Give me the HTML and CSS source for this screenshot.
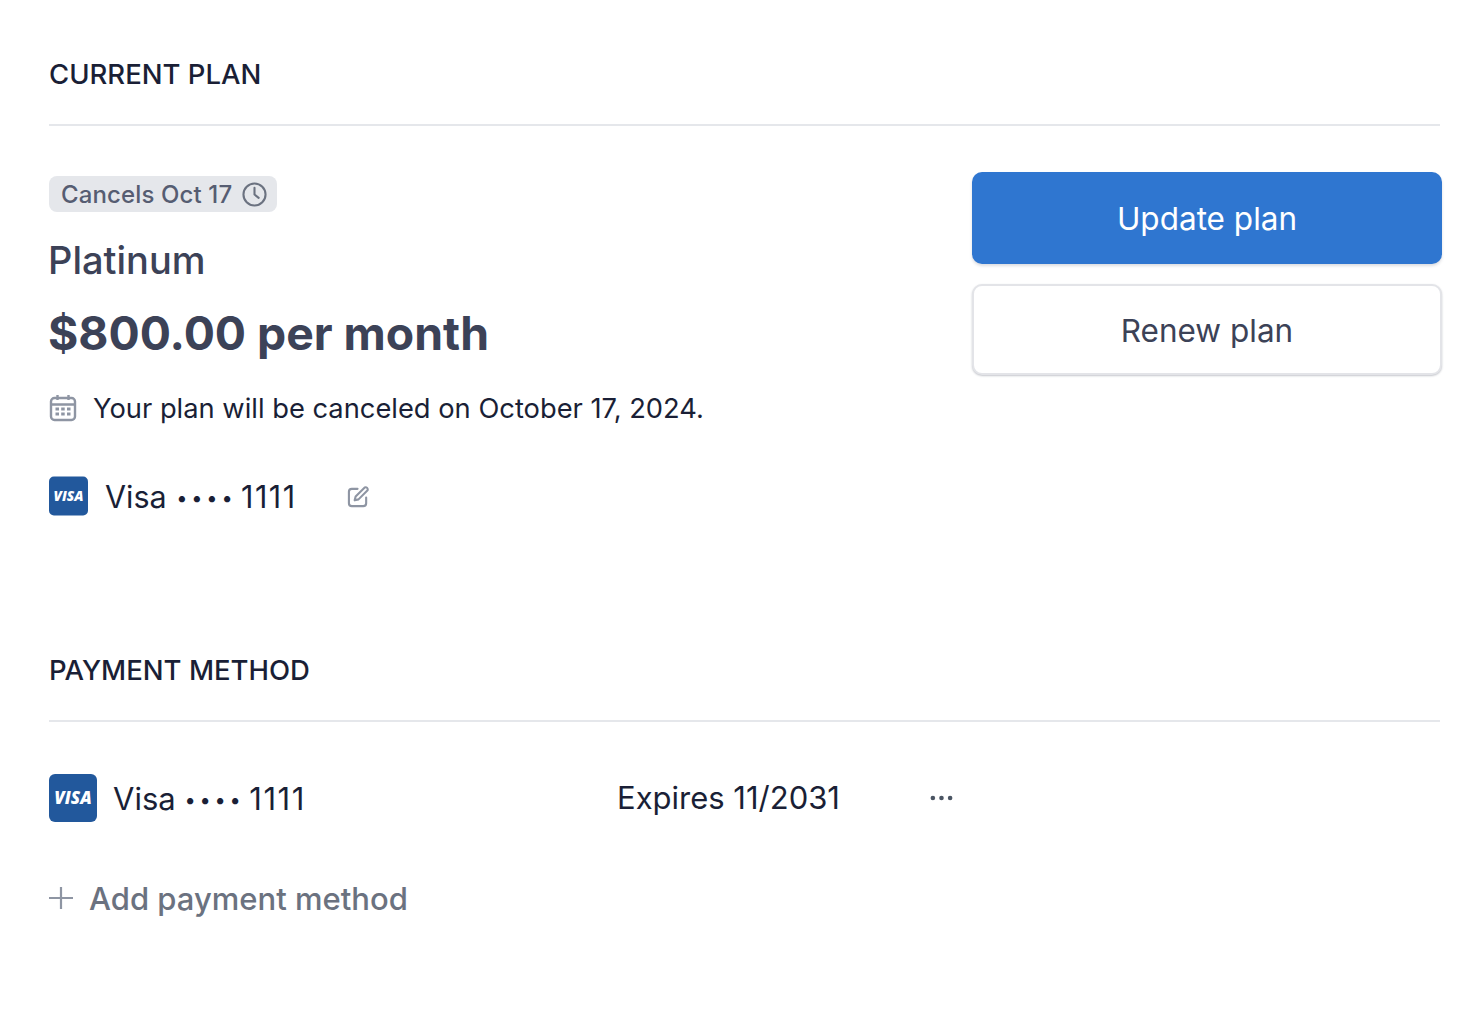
FILE: index.html
```html
<!DOCTYPE html>
<html lang="en">
<head>
<meta charset="utf-8">
<title>Billing</title>
<link rel="stylesheet" href="styles.css">
</head>
<body>
<main class="page">
  <section class="plan-section">
    <h2 class="section-title">CURRENT PLAN</h2>
    <div class="plan-body">
      <div class="plan-info">
        <span class="badge">Cancels Oct 17
          <svg class="badge-icon" viewBox="0 0 24 24" fill="none" stroke="#6b7280" stroke-width="2"><circle cx="12" cy="12" r="10.600"/><path d="M12 5.500V12l4 3.200" stroke-linecap="round" stroke-linejoin="round"/></svg>
        </span>
        <div class="plan-name">Platinum</div>
        <div class="plan-price">$800.00 per month</div>
        <div class="notice">
          <svg class="calendar" viewBox="0 0 28 28" fill="none" stroke="#8e95a3" stroke-width="2.400"><rect x="2" y="4" width="24" height="22" rx="3.500"/><path d="M2 10.500h24M8.500 1v5M19.500 1v5"/><path d="M6.500 15h3.500M12.200 15h3.500M18 15h3.500M6.500 20h3.500M12.200 20h3.500M18 20h3.500" stroke-width="3.200"/></svg>
          <span>Your plan will be canceled on October 17, 2024.</span>
        </div>
        <div class="card-row">
          <svg class="visa visa-small" viewBox="0 0 40 40"><rect width="40" height="40" rx="5" fill="#22589c"/><text x="20" y="25" class="visa-text" text-anchor="middle">VISA</text></svg>
          <span class="card-label card-label-small">Visa <span class="dots">••••</span> <span class="digits">1111</span></span>
          <svg class="edit" viewBox="0 0 24 24" fill="none" stroke="#8e95a3" stroke-width="2.200" stroke-linecap="round" stroke-linejoin="round"><path d="M11 4H5a3 3 0 0 0-3 3v12a3 3 0 0 0 3 3h12a3 3 0 0 0 3-3v-6"/><path d="M18.500 2.500a2.300 2.300 0 0 1 3 3L12 15l-4 1 1-4z"/></svg>
        </div>
      </div>
      <div class="actions">
        <button class="btn btn-primary" type="button">Update plan</button>
        <button class="btn btn-secondary" type="button">Renew plan</button>
      </div>
    </div>
  </section>
  <section class="payment-section">
    <h2 class="section-title">PAYMENT METHOD</h2>
    <div class="method-row">
      <div class="method-card">
        <svg class="visa visa-large" viewBox="0 0 48 48"><rect width="48" height="48" rx="6" fill="#22589c"/><text x="24" y="30" class="visa-text visa-text-large" text-anchor="middle">VISA</text></svg>
        <span class="card-label">Visa <span class="dots">••••</span> <span class="digits">1111</span></span>
      </div>
      <span class="expires">Expires 11/2031</span>
      <svg class="more" viewBox="0 0 24 6" fill="#4b5563"><circle cx="3" cy="3" r="2.400"/><circle cx="12" cy="3" r="2.400"/><circle cx="21" cy="3" r="2.400"/></svg>
    </div>
    <div class="add-row">
      <svg class="plus" viewBox="0 0 24 24" fill="none" stroke="#8e95a3" stroke-width="2.200"><path d="M12 1v22M0 12h24"/></svg>
      <span>Add payment method</span>
    </div>
  </section>
</main>
</body>
</html>
```
FILE: styles.css
```css
* { box-sizing: border-box; }
html, body { margin: 0; padding: 0; background: #fff; }
body { font-family: Inter, "Liberation Sans", sans-serif; color: #1a1f36; }
.page { width: 1466px; height: 1014px; padding: 56px 26px 0 49px; overflow: hidden; }
.section-title { margin: 0; height: 70px; border-bottom: 2px solid #e5e7eb; font-size: 27.500px; line-height: 36px; font-weight: 450; color: #1a1f36; }
.plan-body { display: flex; justify-content: space-between; padding-top: 46px; margin-right: -2px; }
.plan-info { display: flex; flex-direction: column; align-items: flex-start; padding-top: 4px; }
.badge { display: inline-flex; align-items: center; gap: 10px; height: 36px; padding: 0 10px 0 12px; border-radius: 8px; background: #e5e7eb; color: #565d72; font-size: 24px; font-weight: 450; letter-spacing: 0.130px; }
.badge-icon { width: 25px; height: 25px; }
.plan-name { margin-top: 25px; margin-left: -1px; font-size: 38px; line-height: 46px; font-weight: 450; color: #3c4257; }
.plan-price { margin-top: 22px; margin-left: -1px; font-size: 46.300px; line-height: 56px; font-weight: 700; color: #3c4257; }
.notice { display: flex; align-items: center; gap: 16px; margin-top: 27px; height: 40px; font-size: 27.300px; color: #1a1f36; }
.calendar { width: 28px; height: 28px; }
.card-row { display: flex; align-items: center; margin-top: 48px; height: 40px; }
.visa { display: block; flex: none; }
.visa-small { width: 39px; height: 40px; margin-right: 17px; }
.visa-large { width: 48px; height: 48px; margin-right: 16px; }
.visa-text { fill: #fff; font-family: "Open Sans", sans-serif; font-size: 14px; font-weight: 800; font-style: italic; }
.visa-text-large { font-size: 17px; }
.card-label { padding-top: 3px; font-size: 31px; line-height: 40px; white-space: nowrap; color: #1a1f36; }
.card-label-small { font-size: 30.500px; }
.dots { font-size: 20px; letter-spacing: 3.800px; vertical-align: 3px; margin-right: -4px; }
.card-label-small .dots { margin-left: 1px; }
.digits { letter-spacing: 1.500px; }
.edit { width: 23px; height: 23px; margin-left: 50px; }
.actions { display: flex; flex-direction: column; gap: 20px; width: 470px; }
.btn { display: block; width: 100%; height: 92px; padding-top: 2px; border-radius: 10px; font-family: inherit; font-size: 31.500px; font-weight: 400; cursor: pointer; }
.btn-primary { border: 0; background: #2f76d0; color: #fff; box-shadow: 0 2px 3px rgba(60, 66, 87, 0.18); }
.btn-secondary { height: 91px; border: 2px solid #e3e4e8; background: #fff; color: #3c4257; box-shadow: 0 1px 2px rgba(60, 66, 87, 0.3); }
.payment-section { margin-top: 136px; }
.method-row { display: flex; align-items: center; padding-top: 51px; }
.method-card { display: flex; align-items: center; width: 569px; }
.expires { width: 312px; padding-top: 1px; margin-left: -1px; font-size: 31px; line-height: 48px; color: #1a1f36; }
.more { width: 23px; height: 6px; margin-left: 1px; }
.add-row { display: flex; align-items: center; gap: 16px; margin-top: 52px; height: 48px; font-size: 31px; font-weight: 500; color: #6b7280; }
.plus { width: 24px; height: 24px; }
```
